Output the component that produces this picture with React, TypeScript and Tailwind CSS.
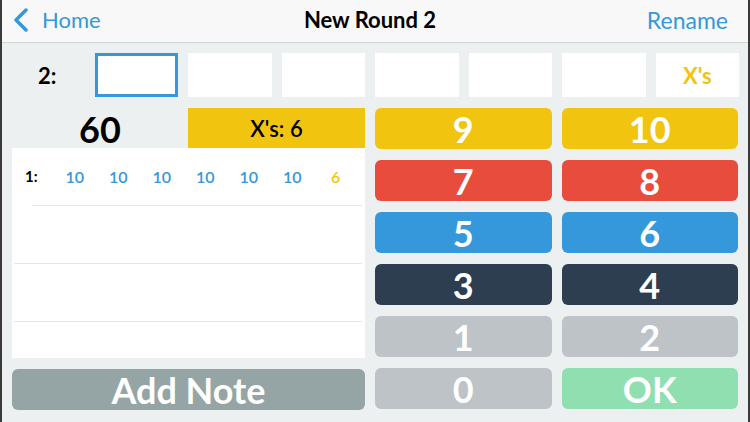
const keys = [
    { label: '9', cls: 'bg-[#f1c40f]' },
    { label: '10', cls: 'bg-[#f1c40f]' },
    { label: '7', cls: 'bg-[#e74c3c]' },
    { label: '8', cls: 'bg-[#e74c3c]' },
    { label: '5', cls: 'bg-[#3498db]' },
    { label: '6', cls: 'bg-[#3498db]' },
    { label: '3', cls: 'bg-[#2c3e50]' },
    { label: '4', cls: 'bg-[#2c3e50]' },
    { label: '1', cls: 'bg-[#bdc3c7]' },
    { label: '2', cls: 'bg-[#bdc3c7]' },
];

const scores = ['10', '10', '10', '10', '10', '10', '6'];

export default function App() {
    return (
        <div
            className="w-[750px] h-[422px] overflow-hidden bg-[#ecf0f1] border-x-2 border-[#3a3a3a] flex flex-col"
            style={{ fontFamily: 'Lato, "Open Sans", sans-serif' }}
        >
            {/* nav bar */}
            <div className="h-[43px] shrink-0 bg-[#f8f8f8] border-b border-[#d0d4d6] flex items-center justify-between pl-[10px] pr-[20px] pb-[2px]">
                <div className="flex items-center text-[#3498db] w-[160px]">
                    <svg width="17" height="24" viewBox="0 0 17 24" className="shrink-0">
                        <polyline points="14,2 4,12 14,22" fill="none" stroke="#3498db" strokeWidth="3.5" strokeLinecap="round" strokeLinejoin="round" />
                    </svg>
                    <span className="text-[22px] ml-[13px] leading-none">Home</span>
                </div>
                <div className="text-[22px] font-bold text-black leading-none">New Round 2</div>
                <div className="w-[160px] text-right text-[23px] text-[#3498db] leading-none">Rename</div>
            </div>

            {/* entry row */}
            <div className="flex items-center mt-[10px] h-[44px] pr-[9px]">
                <div className="w-[93px] pl-[36px] text-[22px] font-bold text-black">2:</div>
                <div className="flex-1 grid grid-cols-7 gap-[10px] h-full">
                    <div className="bg-white border-[3px] border-[#3498db]" />
                    <div className="bg-white" />
                    <div className="bg-white" />
                    <div className="bg-white" />
                    <div className="bg-white" />
                    <div className="bg-white" />
                    <div className="bg-white flex items-center justify-center text-[22px] font-bold text-[#f1c40f]">X's</div>
                </div>
            </div>

            {/* main */}
            <div className="flex mt-[11px] px-[10px] gap-[10px]">
                <div className="w-[353px] flex flex-col">
                    <div className="flex h-[40px]">
                        <div className="w-[176px] flex items-center justify-center text-[36px] font-bold text-black leading-none pt-[2px]">60</div>
                        <div className="flex-1 bg-[#f1c40f] flex items-center justify-center text-[22px] font-semibold text-black">X's: 6</div>
                    </div>
                    <div className="bg-white h-[210px] flex flex-col">
                        <div className="h-[57px] flex items-center pl-[13px]">
                            <div className="w-[28px] text-[15px] font-bold text-black">1:</div>
                            <div className="flex">
                                {scores.map((s, i) => (
                                    <div
                                        key={i}
                                        className={`w-[43.5px] text-center text-[16px] font-semibold ${i === 6 ? 'text-[#f1c40f]' : 'text-[#3498db]'}`}
                                    >
                                        {s}
                                    </div>
                                ))}
                            </div>
                        </div>
                        <div className="h-px bg-[#e3e7e8] ml-[20px] mr-[3px]" />
                        <div className="h-[57px]" />
                        <div className="h-px bg-[#e3e7e8] ml-[2px] mr-[3px]" />
                        <div className="h-[57px]" />
                        <div className="h-px bg-[#e3e7e8] ml-[2px] mr-[3px]" />
                    </div>
                    <button className="mt-[11px] h-[41px] rounded-[6px] bg-[#95a5a6] text-white text-[36px] font-bold leading-none flex items-center justify-center">
                        Add Note
                    </button>
                </div>

                <div className="flex-1 grid grid-cols-2 gap-x-[10px] gap-y-[11px] auto-rows-[41px]">
                    {keys.map((k) => (
                        <button
                            key={k.label}
                            className={`${k.cls} rounded-[6px] text-white text-[36px] font-bold leading-none flex items-center justify-center`}
                        >
                            {k.label}
                        </button>
                    ))}
                    <button className="bg-[#bdc3c7] rounded-[6px] text-white text-[36px] font-bold leading-none flex items-center justify-center">0</button>
                    <button className="bg-[#8fdfb0] rounded-[6px] text-white text-[36px] font-bold leading-none flex items-center justify-center">OK</button>
                </div>
            </div>
        </div>
    );
}
